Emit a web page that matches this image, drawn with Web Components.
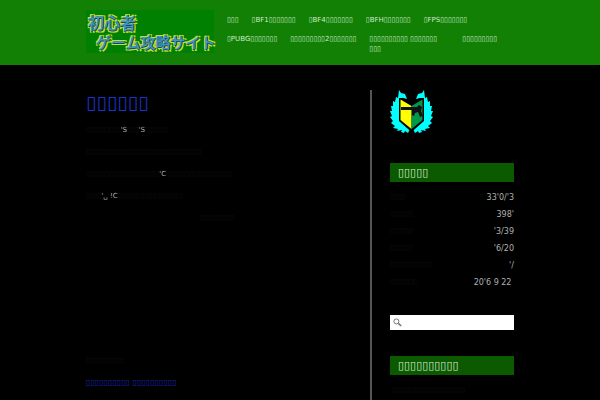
<!DOCTYPE html>
<html lang="ja">
<head>
<meta charset="utf-8">
<meta name="viewport" content="width=device-width, initial-scale=1">
<title>初心者ゲーム攻略サイト</title>
<style>
    body {
        margin: 0;
        min-height: 100vh;
        background: #000;
        color: #111;
        font-family: "DejaVu Sans", "Noto Sans CJK JP", sans-serif;
        font-size: 7px;
        --header-bg: #118005;
        --title-bg: #0c5a00;
        --value-color: #b0b0b0;
        --link-color: #1026a8;
    }
</style>
</head>
<body>
<game-page></game-page>

<script>
const define = (name, html) => {
    const template = document.createElement("template");
    template.innerHTML = html;
    customElements.define(name, class extends HTMLElement {
        constructor() {
            super();
            this.attachShadow({ mode: "open" });
            this.shadowRoot.appendChild(template.content.cloneNode(true));
        }
    });
};

define("site-logo", /* html */ `
    <style>
        :host { display: block; flex: none; width: 128px; }
        a {
            display: block;
            padding: 3px 0 2px 2px;
            background: #008000;
            color: #3c98bc;
            font-family: "Noto Sans CJK JP", sans-serif;
            font-size: 16px;
            font-weight: 500;
            line-height: 19px;
            white-space: nowrap;
            text-decoration: none;
            text-shadow:
                1px 0 #1c4668, 0 1px #1c4668,
                -1px -1px #c4e030, 2px -1px #c4e030,
                -1px 2px #c4e030, 2px 2px #c4e030,
                -1px 0 #c4e030, 0 -1px #c4e030;
        }
        span { display: block; }
        .second { padding-left: 8px; font-size: 15px; }
    </style>
    <a href="#"><span>初心者</span><span class="second">ゲーム攻略サイト</span></a>
`);

define("nav-item", /* html */ `
    <style>
        :host { display: block; max-width: 80px; }
        a { color: #d4ecd0; text-decoration: none; }
    </style>
    <a href="#"><slot></slot></a>
`);

define("site-header", /* html */ `
    <style>
        :host { display: block; background: var(--header-bg); }
        .inner {
            display: flex;
            align-items: flex-start;
            gap: 13px;
            max-width: 428px;
            margin: 0 auto;
            padding: 10px 0 11px;
        }
        nav {
            display: flex;
            flex-wrap: wrap;
            gap: 9px 13px;
            padding-top: 5px;
            line-height: 10px;
        }
    </style>
    <header class="inner">
        <site-logo></site-logo>
        <nav><slot></slot></nav>
    </header>
`);

define("side-title", /* html */ `
    <style>
        :host { display: block; }
        h3 {
            margin: 0;
            padding: 0 8px;
            background: var(--title-bg);
            color: #d4ecd0;
            font-size: 11px;
            font-weight: 400;
            line-height: 19px;
        }
    </style>
    <h3><slot></slot></h3>
`);

define("stat-row", /* html */ `
    <style>
        :host {
            display: flex;
            justify-content: space-between;
            line-height: 17px;
        }
        .value {
            color: var(--value-color);
            font-size: 8px;
            white-space: pre;
        }
    </style>
    <span><slot></slot></span>
    <span class="value"><slot name="value"></slot></span>
`);

define("search-box", /* html */ `
    <style>
        :host { display: block; }
        label {
            display: flex;
            align-items: center;
            gap: 4px;
            padding-left: 3px;
            background: #fff;
        }
        svg { flex: none; width: 9px; height: 9px; }
        input {
            flex: 1;
            min-width: 0;
            height: 15px;
            padding: 0;
            border: 0;
            outline: 0;
            background: none;
            font: inherit;
        }
    </style>
    <label>
        <svg viewBox="0 0 9 9" fill="none" stroke="#777">
            <circle cx="3.4" cy="3.4" r="2.5"/>
            <path d="M5.3 5.3 8.2 8" stroke-width="1.6"/>
        </svg>
        <input type="search" aria-label="検索">
    </label>
`);

define("beginner-emblem", /* html */ `
    <style>
        :host { display: block; }
        svg { display: block; width: 44px; height: 46px; }
    </style>
    <svg viewBox="0 0 44 46" aria-hidden="true">
        <path id="wing" fill="#0ff" d="M9 0 11 3 15 4 17 9 13 8 9 10V30L20 39 18 43 15 41 14 43 11 42 12 40 7 41 8 39 3 38 5 36 1 33 3 31 0 27 2 26 0 21 2 21 1 16 3 16 3 11 5 12 6 7 8 8Z"/>
        <use href="#wing" transform="matrix(-1 0 0 1 43 0)"/>
        <path fill="#000" d="M9 8 13 8 21.5 15 30 8 34 8V31L21.5 42 9 31Z"/>
        <path fill="#ff0" d="M10.500 9.500 21.500 16V39L10.500 30Z"/>
        <path fill="#00984a" d="M32.500 9.500 21.500 16V39L32.500 30Z"/>
        <path fill="#111" d="M11 17H27L29 15 32 17 31 21 33 26 30 27 28 22 25 23 24 26 22 25V20H11Z"/>
    </svg>
`);

define("main-article", /* html */ `
    <style>
        :host { display: block; }
        h1 {
            margin: 0 0 11px;
            color: #1c33c4;
            font-size: 19px;
            font-weight: 400;
            line-height: 24px;
        }
        p { margin: 0 0 12px; line-height: 10px; white-space: pre-wrap; }
        b { color: var(--value-color); font-weight: 400; }
        .sign { width: 148px; text-align: right; }
        .space { height: 121px; }
        a { color: var(--link-color); font-size: 8px; text-decoration: none; }
    </style>
    <h1>▯▯▯▯▯▯</h1>
    <p>▯▯▯▯▯▯▯▯▯<b>'S</b>▯▯▯<b>'S</b>▯▯▯▯▯▯</p>
    <p>▯▯▯▯▯▯▯▯▯▯▯▯▯▯▯▯▯▯▯▯▯▯▯▯▯▯▯▯▯▯</p>
    <p>▯▯▯▯▯▯▯▯▯▯▯▯▯▯▯▯▯▯▯<b>'C</b>▯▯▯▯▯▯▯▯▯▯▯▯▯▯▯▯▯</p>
    <p>▯▯▯▯<b>'␣ !C</b>▯▯▯▯▯▯▯▯▯▯▯▯▯▯▯▯▯</p>
    <p class="sign">▯▯▯▯▯▯▯▯▯</p>
    <div class="space"></div>
    <p>▯▯▯▯▯▯▯▯▯▯</p>
    <a href="#">▯▯▯▯▯▯▯▯▯▯ ▯▯▯▯▯▯▯▯▯▯</a>
`);

define("side-bar", /* html */ `
    <style>
        :host { display: block; }
        beginner-emblem { margin-bottom: 27px; }
        .stats { padding: 7px 0 24px; }
        search-box { margin-bottom: 26px; }
        p { margin: 0; padding: 10px 2px; line-height: 10px; }
    </style>
    <beginner-emblem></beginner-emblem>
    <side-title>▯▯▯▯▯</side-title>
    <div class="stats">
        <stat-row>▯▯▯▯<span slot="value">33'0/'3</span></stat-row>
        <stat-row>▯▯▯▯▯▯<span slot="value">398'</span></stat-row>
        <stat-row>▯▯▯▯▯▯<span slot="value">'3/39</span></stat-row>
        <stat-row>▯▯▯▯▯▯<span slot="value">'6/20</span></stat-row>
        <stat-row>▯▯▯▯▯▯▯▯▯▯▯<span slot="value">'/</span></stat-row>
        <stat-row>▯▯▯▯▯▯▯<span slot="value">20'6 9 22 </span></stat-row>
    </div>
    <search-box></search-box>
    <side-title>▯▯▯▯▯▯▯▯▯▯</side-title>
    <p>▯▯▯▯▯▯▯▯▯▯▯▯▯▯▯▯▯▯▯</p>
`);

define("game-page", /* html */ `
    <style>
        :host { display: block; }
        .columns {
            display: grid;
            grid-template-columns: 1fr 124px;
            max-width: 428px;
            margin: 0 auto;
            padding-top: 25px;
        }
        main { margin-right: 18px; border-right: 2px solid #555; }
    </style>
    <site-header>
        <nav-item>▯▯▯</nav-item>
        <nav-item>▯BF1▯▯▯▯▯▯▯</nav-item>
        <nav-item>▯BF4▯▯▯▯▯▯▯</nav-item>
        <nav-item>▯BFH▯▯▯▯▯▯▯</nav-item>
        <nav-item>▯FPS▯▯▯▯▯▯▯</nav-item>
        <nav-item>▯PUBG▯▯▯▯▯▯▯</nav-item>
        <nav-item>▯▯▯▯▯▯▯▯▯2▯▯▯▯▯▯▯</nav-item>
        <nav-item>▯▯▯▯▯▯▯▯▯▯ ▯▯▯▯▯▯▯ ▯▯▯</nav-item>
        <nav-item>▯▯▯▯▯▯▯▯▯</nav-item>
    </site-header>
    <div class="columns">
        <main><main-article></main-article></main>
        <aside><side-bar></side-bar></aside>
    </div>
`);
</script>
</body>
</html>
